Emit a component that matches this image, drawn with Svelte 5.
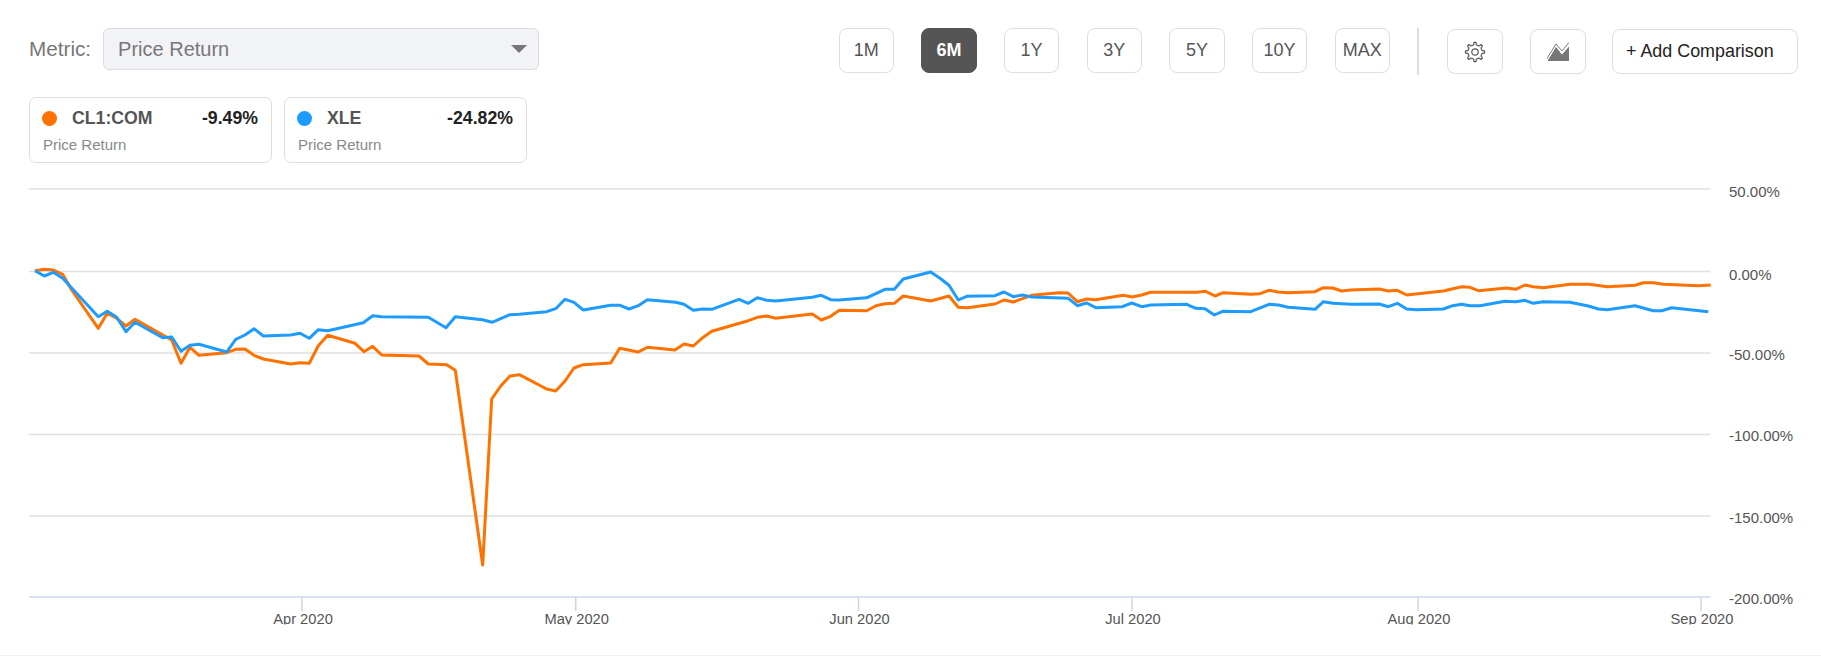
<script>
	const ranges = ['1M', '6M', '1Y', '3Y', '5Y', '10Y', 'MAX'];
	const series = [
		{ name: 'CL1:COM', value: '-9.49%', color: '#ff7200' },
		{ name: 'XLE', value: '-24.82%', color: '#1e9bff' }
	];

	const grid = [
		{ y: 189, label: '50.00%' },
		{ y: 271.5, label: '0.00%' },
		{ y: 353, label: '-50.00%' },
		{ y: 434.5, label: '-100.00%' },
		{ y: 516, label: '-150.00%' },
		{ y: 597, label: '-200.00%' }
	];

	const months = [
		{ x: 302, label: 'Apr 2020' },
		{ x: 575.7, label: 'May 2020' },
		{ x: 858.5, label: 'Jun 2020' },
		{ x: 1132, label: 'Jul 2020' },
		{ x: 1418, label: 'Aug 2020' },
		{ x: 1701, label: 'Sep 2020' }
	];

	// traced from the chart, in page pixels
	const orange = `35,270.7 44.3,269.3 53.3,270 62.7,274.3 71.7,290 98.3,328.3 107.3,313.3 116.7,318.3 126,326 135,319.3
		171.7,340 181,363.3 190,347.3 199,355.3 226.7,352.7 235.7,349.3 245,349 254,355.3 263.3,359 290.7,364 300,362.7
		309.3,363.3 318.3,345.7 327.7,335.3 355,343.3 364,351.7 372.7,346.3 381.7,355 419,356 428.3,364 446.7,364.7
		455.3,370.3 482.7,565 491.7,399 500.7,386 510,376 519.3,374.7 546.7,389 555.7,391 565,381 574,368 583.3,364.7
		610.7,363 619.7,348.3 638.3,352 647.3,347.3 675,350 684,344 693.3,346 702.7,337.7 711.7,331.3 748.3,320.7
		757.3,317.3 766.7,316 775.7,318.3 812.3,314 821.3,320 830.7,316.3 839.3,310.3 866.7,310.7 876,305.7 885,303.7
		894.3,303.3 903.3,296 930.7,301 949,296 958.3,307.3 967.3,307.7 995,304 1004,300 1013.3,302 1031.7,295.3
		1059,292.7 1068,293 1077.3,301.7 1086.7,299 1095.7,299.7 1123.3,295.3 1132.3,297 1141.7,295 1150.7,292.3
		1196.7,292.3 1205.7,291.3 1215,296 1223.3,292.7 1250.7,294.3 1260,293.7 1269,290.3 1278.3,292 1288.3,292.7
		1315,291.7 1323.3,287.7 1332.7,288 1341.7,291 1350.7,290 1379.3,289 1388.3,291 1397.3,290.3 1406.7,295
		1443.3,291 1461.7,286.7 1470,287.3 1478.3,290.7 1506.7,288 1515.7,289.3 1525,285 1533.3,286.7 1543.3,287.7
		1570,284.3 1589.3,284.3 1607.3,286.7 1635,285.3 1643.3,282.7 1653.3,282.7 1663.3,284.3 1698.3,285.7 1710.7,285`;

	const blue = `35,270.7 44.3,276 53.3,272.3 62.7,278.3 98.3,316.7 107.3,311.3 116.7,317.3 126,331.7 135,322.3 162.7,337.7
		171.7,337 181,351.3 190,345.3 199,344.3 226.7,352 235.7,339.3 245,335 254,328.7 263.3,336 290.7,335 300,333.3
		309.3,338.3 318.3,329.7 327.7,330.7 363.3,322.7 372.7,315.7 381.7,316.7 428.3,317.3 446,327.7 455.3,316.7
		482.5,319.8 492,322.3 510,314.7 519.3,314.3 546.7,311.7 555.7,308.7 565,299.3 574,302.3 583.3,310 610.7,305.3
		620,305.3 629,309 638.3,305.7 647.3,299.7 675.7,302.3 684,304.3 693.3,310.3 702.7,309 711.7,309.3 739,299.3
		748.3,303.3 757.3,297.7 766.7,300.3 775.7,301 812.3,297.3 821.3,295.3 830.7,299.7 839.3,300 866.7,297.8 885,289.3
		894.3,289.3 903.3,279 930.7,272 940,278.3 949,285.3 958.3,300 966.7,296.3 995,295.7 1004,292 1013.3,296.7
		1022.3,295 1031.7,297 1068.3,298.3 1077.3,305.7 1086.7,303 1095.7,307.7 1122.3,306.7 1131.7,303 1141.7,306.7
		1150.7,305 1186.7,304.3 1195.7,308.3 1205,308.7 1214.3,315 1222.7,311.3 1250.7,311.7 1269,304.3 1278.3,305
		1288.3,307.3 1315,309.3 1323.5,301.7 1333,303.3 1351.7,304.3 1379.3,304 1388.3,306.7 1397.3,303.3 1406.7,309
		1416.7,309.7 1443.3,309 1452.7,305.7 1461.7,304.3 1470,305.7 1480,305.7 1505,301.3 1515.7,301.7 1525,300.3
		1533.3,303.3 1543.3,301.7 1570,302.3 1588.3,306 1598.3,309 1607.3,309.7 1635,305.7 1653.3,310.7 1661.7,310.7
		1671.7,307.7 1708.3,311.7`;

	function gearPath(cx, cy, outer, inner, teeth) {
		const step = (Math.PI * 2) / teeth;
		const pts = [];
		for (let i = 0; i < teeth; i++) {
			const a = i * step - Math.PI / 2;
			const w = step * 0.2;
			pts.push([a - w * 1.25, inner], [a - w * 0.7, outer], [a + w * 0.7, outer], [a + w * 1.25, inner]);
		}
		return (
			pts
				.map(([a, r], i) => `${i ? 'L' : 'M'}${(cx + r * Math.cos(a)).toFixed(2)} ${(cy + r * Math.sin(a)).toFixed(2)}`)
				.join(' ') + 'Z'
		);
	}
</script>

<div class="page">
	<div class="toolbar">
		<div class="metric">
			<span class="metric-label">Metric:</span>
			<div class="select">
				<span>Price Return</span>
				<i class="caret"></i>
			</div>
		</div>
		<div class="actions">
			<div class="ranges">
				{#each ranges as r}
					<button type="button" class="btn range" class:active={r === '6M'}>{r}</button>
				{/each}
			</div>
			<div class="divider"></div>
			<button type="button" class="btn icon" aria-label="Settings">
				<svg width="22" height="22" viewBox="0 0 22 22" fill="none" stroke="#555" stroke-width="1.2" stroke-linejoin="round">
					<path d={gearPath(11, 11, 9.6, 7.2, 8)} />
					<circle cx="11" cy="11" r="3.2" />
				</svg>
			</button>
			<button type="button" class="btn icon chart-type" aria-label="Chart type">
				<svg width="24" height="20" viewBox="0 0 24 20">
					<path d="M1 16.5 10 2 16 9 23 .5" fill="none" stroke="#777" stroke-width="1" />
					<path d="M1.5 19 10 5 16 12.5 23 4.5V19Z" fill="#777" />
				</svg>
			</button>
			<button type="button" class="btn add">+ Add Comparison</button>
		</div>
	</div>

	<div class="cards">
		{#each series as s}
			<div class="card">
				<div class="card-head">
					<span class="dot" style="background: {s.color}"></span>
					<span class="card-name">{s.name}</span>
					<span class="card-value">{s.value}</span>
				</div>
				<div class="card-sub">Price Return</div>
			</div>
		{/each}
	</div>

	<svg class="chart" width="1821" height="479" viewBox="0 176 1821 479">
		<defs>
			<clipPath id="month-clip"><rect x="0" y="176" width="1821" height="448.5" /></clipPath>
		</defs>
		{#each grid as g, i}
			{#if i < grid.length - 1}
				<line class="grid" x1="29" x2="1710.5" y1={g.y} y2={g.y} />
			{/if}
			<text class="label value" x="1729" y={g.y + (i === 0 ? 7.5 : i === 1 ? 8 : 6.5)}>{g.label}</text>
		{/each}
		<line class="axis" x1="29" x2="1710.5" y1="597" y2="597" />
		<g clip-path="url(#month-clip)">
			{#each months as m}
				<line class="tick" x1={m.x} x2={m.x} y1="597" y2="611" />
				<text class="label" x={m.x + 1} y="624" text-anchor="middle">{m.label}</text>
			{/each}
		</g>
		<polyline class="line" points={orange} stroke={series[0].color} />
		<polyline class="line" points={blue} stroke={series[1].color} />
	</svg>
</div>

<style>
	:global(body) {
		background: #fff;
	}

	.page {
		box-sizing: border-box;
		height: 656px;
		overflow: hidden;
		border-bottom: 1px solid #f0f0f0;
		padding-top: 28px;
		font-family: 'Liberation Sans', Arial, sans-serif;
		color: #555;
	}

	.toolbar {
		display: flex;
		justify-content: space-between;
		align-items: flex-start;
		padding: 0 23px 0 29px;
	}

	.metric {
		display: flex;
		align-items: center;
		gap: 12px;
	}

	.metric-label {
		font-size: 20.7px;
		color: #777;
	}

	.select {
		box-sizing: border-box;
		width: 435.5px;
		height: 42px;
		display: flex;
		align-items: center;
		justify-content: space-between;
		padding: 0 11px 0 14px;
		background: #f2f3f7;
		border: 1px solid #dcdde0;
		border-radius: 6px;
		font-size: 20px;
		color: #777;
	}

	.caret {
		width: 0;
		height: 0;
		border-left: 8px solid transparent;
		border-right: 8px solid transparent;
		border-top: 8px solid #777;
	}

	.actions {
		display: flex;
		align-items: flex-start;
	}

	.ranges {
		display: flex;
		gap: 27.17px;
	}

	.btn {
		box-sizing: border-box;
		height: 45px;
		margin: 0;
		padding: 0;
		display: flex;
		align-items: center;
		justify-content: center;
		background: #fff;
		border: 1px solid #dedede;
		border-radius: 8px;
		font-family: inherit;
		font-size: 18px;
		color: #555;
	}

	.range {
		width: 55.5px;
	}

	.active {
		background: #555;
		border-color: #555;
		color: #fff;
		font-weight: bold;
	}

	.divider {
		width: 2px;
		height: 47px;
		margin: 0 28px 0 27px;
		background: #dcdcdc;
	}

	.icon {
		width: 55.5px;
		margin-top: 1px;
	}

	.chart-type {
		margin-left: 27.5px;
	}

	.add {
		width: 186.5px;
		margin: 1px 0 0 26px;
		padding-left: 13.5px;
		justify-content: flex-start;
		font-size: 17.9px;
		color: #222;
	}

	.cards {
		display: flex;
		gap: 12px;
		padding: 21.5px 0 0 29px;
	}

	.card {
		box-sizing: border-box;
		width: 243px;
		height: 66.5px;
		padding: 10px 13px 0 12px;
		border: 1px solid #dedede;
		border-radius: 7px;
	}

	.card-head {
		display: flex;
		align-items: center;
		height: 21px;
		font-size: 17.7px;
		font-weight: bold;
	}

	.dot {
		width: 15px;
		height: 15px;
		border-radius: 50%;
		flex: none;
	}

	.card-name {
		margin-left: 15px;
		color: #555;
	}

	.card-value {
		margin-left: auto;
		color: #222;
	}

	.card-sub {
		margin: 7px 0 0 1px;
		font-size: 15px;
		color: #888;
	}

	.chart {
		display: block;
		margin-top: 13px;
	}

	.grid {
		stroke: #e0e0e0;
		stroke-width: 1.5;
	}

	.axis {
		stroke: #ccd6eb;
		stroke-width: 1.5;
	}

	.tick {
		stroke: #ccd6eb;
		stroke-width: 1.5;
	}

	.label {
		font-size: 14.7px;
		fill: #555;
	}

	.value {
		font-size: 15px;
	}

	.line {
		fill: none;
		stroke-width: 3;
		stroke-linejoin: round;
		stroke-linecap: butt;
	}
</style>
